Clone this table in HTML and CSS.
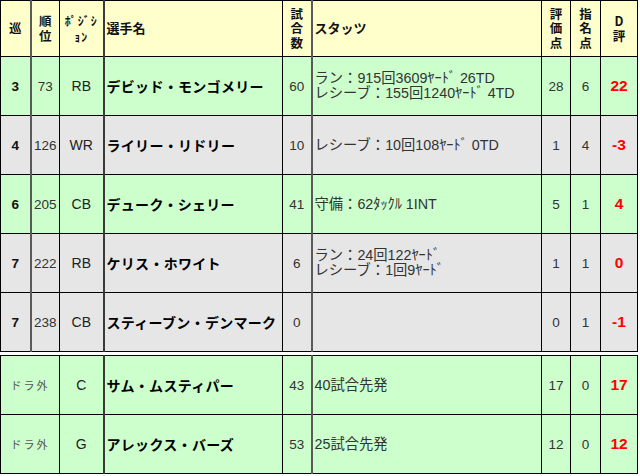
FILE: index.html
```html
<!DOCTYPE html>
<html lang="ja">
<head>
<meta charset="utf-8">
<link rel="stylesheet" href="styles.css">
</head>
<body>
<table class="tbl">
  <colgroup>
    <col class="c1"><col class="c2"><col class="c3"><col class="c4"><col class="c5"><col class="c6"><col class="c7"><col class="c8"><col class="c9">
  </colgroup>
  <tr class="head">
    <th class="ctr">巡</th>
    <th class="ctr g-left">順<br>位</th>
    <th class="ctr pos">ﾎﾟｼﾞｼ<br>ｮﾝ</th>
    <th class="left g-left1">選手名</th>
    <th class="ctr">試<br>合<br>数</th>
    <th class="left g-left">スタッツ</th>
    <th class="ctr">評<br>価<br>点</th>
    <th class="ctr">指<br>名<br>点</th>
    <th class="ctr">D<br>評</th>
  </tr>
  <tr class="green">
    <td class="rnd">3</td>
    <td class="num g-left">73</td>
    <td class="pos-v">RB</td>
    <td class="name g-left1">デビッド・モンゴメリー</td>
    <td class="num">60</td>
    <td class="stats g-left">ラン：915回3609ﾔｰﾄﾞ 26TD<br>レシーブ：155回1240ﾔｰﾄﾞ 4TD</td>
    <td class="num">28</td>
    <td class="num">6</td>
    <td class="d">22</td>
  </tr>
  <tr class="gray">
    <td class="rnd">4</td>
    <td class="num g-left">126</td>
    <td class="pos-v">WR</td>
    <td class="name g-left1">ライリー・リドリー</td>
    <td class="num">10</td>
    <td class="stats g-left">レシーブ：10回108ﾔｰﾄﾞ 0TD</td>
    <td class="num">1</td>
    <td class="num">4</td>
    <td class="d">-3</td>
  </tr>
  <tr class="green">
    <td class="rnd">6</td>
    <td class="num g-left">205</td>
    <td class="pos-v">CB</td>
    <td class="name g-left1">デューク・シェリー</td>
    <td class="num">41</td>
    <td class="stats g-left">守備：62ﾀｯｸﾙ 1INT</td>
    <td class="num">5</td>
    <td class="num">1</td>
    <td class="d">4</td>
  </tr>
  <tr class="gray">
    <td class="rnd">7</td>
    <td class="num g-left">222</td>
    <td class="pos-v">RB</td>
    <td class="name g-left1">ケリス・ホワイト</td>
    <td class="num">6</td>
    <td class="stats g-left">ラン：24回122ﾔｰﾄﾞ<br>レシーブ：1回9ﾔｰﾄﾞ</td>
    <td class="num">1</td>
    <td class="num">1</td>
    <td class="d">0</td>
  </tr>
  <tr class="gray">
    <td class="rnd">7</td>
    <td class="num g-left">238</td>
    <td class="pos-v">CB</td>
    <td class="name g-left1">スティーブン・デンマーク</td>
    <td class="num">0</td>
    <td class="stats g-left"></td>
    <td class="num">0</td>
    <td class="num">1</td>
    <td class="d">-1</td>
  </tr>
</table>
<table class="tbl second">
  <colgroup>
    <col class="c1"><col class="c2"><col class="c3"><col class="c4"><col class="c5"><col class="c6"><col class="c7"><col class="c8"><col class="c9">
  </colgroup>
  <tr class="green">
    <td class="undrafted" colspan="2">ドラ外</td>
    <td class="pos-v">C</td>
    <td class="name g-left1">サム・ムスティパー</td>
    <td class="num">43</td>
    <td class="stats g-left">40試合先発</td>
    <td class="num">17</td>
    <td class="num">0</td>
    <td class="d">17</td>
  </tr>
  <tr class="green">
    <td class="undrafted" colspan="2">ドラ外</td>
    <td class="pos-v">G</td>
    <td class="name g-left1">アレックス・バーズ</td>
    <td class="num">53</td>
    <td class="stats g-left">25試合先発</td>
    <td class="num">12</td>
    <td class="num">0</td>
    <td class="d">12</td>
  </tr>
</table>
</body>
</html>
```

FILE: styles.css
```css
html, body {
  margin: 0;
  padding: 0;
  background: #ffffff;
}

body {
  font-family: "Liberation Sans", "Noto Sans CJK JP", sans-serif;
  color: #222;
}

.tbl {
  border-collapse: collapse;
  table-layout: fixed;
  width: 637px;
}

.second {
  margin-top: 3px;
}

.c1 { width: 30px; }
.c2 { width: 29px; }
.c3 { width: 44px; }
.c4 { width: 179px; }
.c5 { width: 29px; }
.c6 { width: 230px; }
.c7 { width: 29px; }
.c8 { width: 30px; }
.c9 { width: 37px; }

.tbl th,
.tbl td {
  border: 1px solid #000;
  padding: 0;
  overflow: hidden;
  white-space: nowrap;
}

.tbl .g-left {
  border-left: 2px solid #5a5a5a;
}

.tbl .g-left1 {
  border-left: 2px solid #3a3a3a;
}

.head {
  height: 56px;
  background: #ffffcc;
}

.head th {
  font-family: "Noto Sans CJK JP", sans-serif;
  font-weight: bold;
  font-size: 12.5px;
  line-height: 14.5px;
  color: #111;
}

.head .ctr {
  text-align: center;
}

.head .left {
  text-align: left;
  padding-left: 2px;
  font-size: 13px;
}

.head .pos {
  font-size: 12px;
  letter-spacing: 1px;
  line-height: 16px;
}

.green {
  background: #ccffcc;
}

.gray {
  background: #e6e6e6;
}

.tbl tr.green,
.tbl tr.gray {
  height: 59px;
}

.rnd {
  text-align: center;
  font-weight: bold;
  font-size: 13.5px;
  color: #111;
}

.num {
  text-align: center;
  font-size: 13.5px;
  color: #333;
}

.pos-v {
  text-align: center;
  font-size: 14px;
  color: #222;
}

.name {
  font-family: "Noto Sans CJK JP", sans-serif;
  font-weight: bold;
  font-size: 14px;
  padding-left: 2px !important;
  color: #000;
  letter-spacing: 0.3px;
}

.stats {
  font-size: 14.3px;
  line-height: 15px;
  padding-left: 2px !important;
  color: #333;
}

.d {
  text-align: center;
  font-weight: bold;
  font-size: 15.5px;
  color: #ff0000;
}

.undrafted {
  text-align: center;
  font-family: "Noto Sans CJK JP", sans-serif;
  font-size: 11px;
  letter-spacing: 2px;
  color: #555;
}
```
